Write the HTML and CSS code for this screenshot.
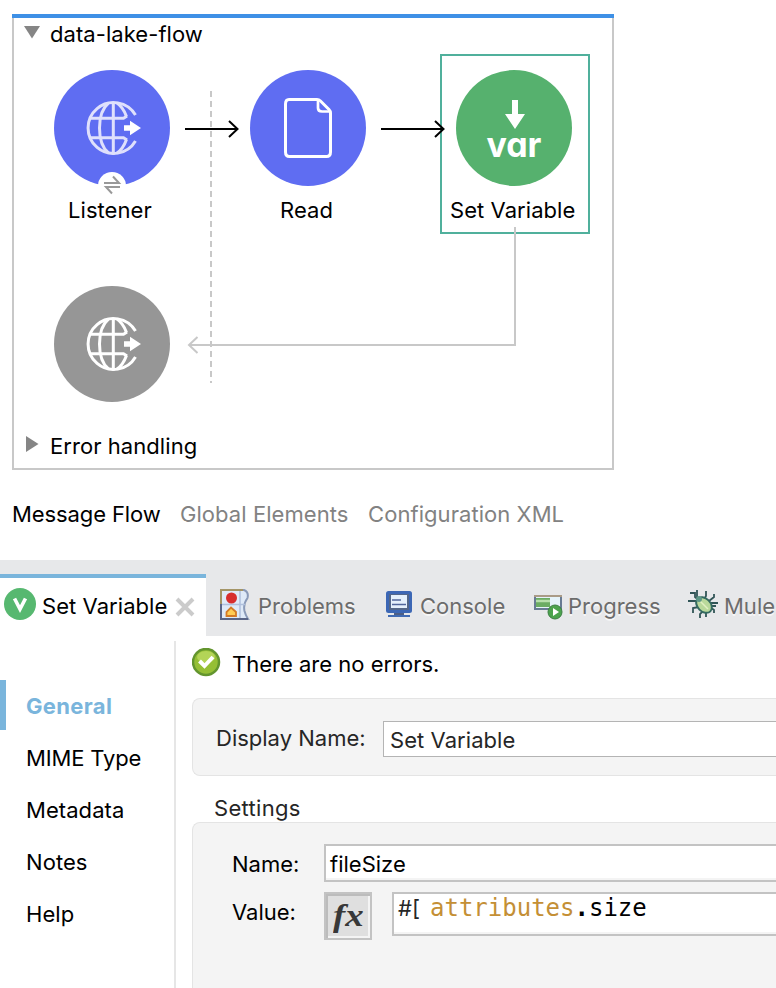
FILE: index.html
```html
<!DOCTYPE html>
<html lang="en">
<head>
<meta charset="utf-8">
<title>data-lake-flow</title>
<link rel="stylesheet" href="styles.css">
</head>
<body>
<svg width="0" height="0" class="defs">
  <defs>
    <g id="globe">
      <g fill="none" stroke-width="3">
        <path d="M81.500 45A25.500 25.500 0 1 0 81.500 71"/>
        <path d="M59.300 32.500V84.500M36 48.300H69.500L73 46M36 67.700H69.500L73 70"/>
        <path d="M54.500 33C42.500 43 42.500 73 54.500 83M63 33C67.500 36 70.500 41 72.500 46.500M63 83C67.500 80 70.500 75 72.500 69.500"/>
      </g>
      <path d="M70 55.200H76V50.800L87 58L76 65.300V60.800H70Z" fill="#fff" stroke="none"/>
    </g>
  </defs>
</svg>

<section class="canvas">
  <div class="flow-box"></div>
  <svg class="wires" width="776" height="490" fill="none">
    <path d="M211 91V383" stroke="#c8c8c8" stroke-width="2" stroke-dasharray="6 4"/>
    <path d="M185 129H237M229 121L237.500 129L229 137" stroke="#000" stroke-width="2"/>
    <path d="M24 26H40L32 38.500Z" fill="#858585"/>
    <path d="M26 436V452L38.500 444Z" fill="#858585"/>
  </svg>
  <span class="label flow-title">data-lake-flow</span>

  <svg class="node listener" width="116" height="116">
    <circle cx="58" cy="58" r="58" fill="#5f6df2"/>
    <use href="#globe" stroke="#dfe0fc"/>
    <circle cx="58" cy="116" r="14" fill="#fff"/>
  </svg>
  <svg class="swap" width="20" height="22" fill="none" stroke="#999" stroke-width="2">
    <path d="M2 9H17L11 2.500M18 13H4L10 19.500"/>
  </svg>
  <span class="label listener-label">Listener</span>

  <svg class="node read" width="116" height="116">
    <circle cx="58" cy="58" r="58" fill="#5f6df2"/>
    <path d="M39 29.500H67Q69 29.500 70.500 31L79 39.500Q80.500 41 80.500 43V82Q80.500 86.500 76.500 86.500H39.500Q35.500 86.500 35.500 82V34Q35.500 29.500 39 29.500Z" fill="none" stroke="#fff" stroke-width="3" stroke-linejoin="round"/>
    <path d="M68 30V38Q68 41.500 72 41.500H80" fill="none" stroke="#fff" stroke-width="2.700"/>
  </svg>
  <span class="label read-label">Read</span>

  <div class="selection"></div>
  <svg class="node variable" width="116" height="116">
    <circle cx="58" cy="58" r="58" fill="#56b16e"/>
    <path d="M56 30H62V44H69L59 59L49 44H56Z" fill="#fff"/>
    <text x="30.500" y="86.500" class="var-text" textLength="55" lengthAdjust="spacing">var</text>
  </svg>
  <span class="label variable-label">Set Variable</span>

  <svg class="node response" width="116" height="116">
    <circle cx="58" cy="58" r="58" fill="#969696"/>
    <use href="#globe" stroke="#fff"/>
  </svg>
  <svg class="wires" width="776" height="490" fill="none">
    <path d="M515 227V345H189M197.500 337L189 345L197.500 353" stroke="#c8c8c8" stroke-width="2"/>
    <path d="M381 129H443M435 121L443.500 129L435 137" stroke="#000" stroke-width="2"/>
  </svg>
  <span class="label error-label">Error handling</span>
</section>

<nav class="editor-tabs">
  <span class="current w-message">Message Flow</span>
  <span class="w-global">Global Elements</span>
  <span class="w-config">Configuration XML</span>
</nav>

<nav class="views">
  <div class="view active">
    <svg width="32" height="32"><circle cx="16" cy="16" r="16" fill="#57b870"/><path d="M10.500 10.500L16 21L21.500 10.500" fill="none" stroke="#fff" stroke-width="3.600"/></svg>
    <span class="t-active">Set Variable</span>
    <svg class="close" width="20" height="20"><path d="M2 2L18 18M18 2L2 18" stroke="#cbcbcb" stroke-width="4"/></svg>
  </div>
  <div class="view problems">
    <svg width="30" height="32">
      <path d="M1 1H24Q29 3 27.500 9Q23 15 24.500 22Q25.500 26 28 30H1Z" fill="#dfeaf8" stroke="#8a9ab8" stroke-width="2"/>
      <path d="M20 2V29M2 15.500H25" stroke="#b0c0dc" stroke-width="1.500"/>
      <path d="M1 30V1H23" fill="none" stroke="#a49567" stroke-width="2"/>
      <path d="M1 15V30H28" fill="none" stroke="#596587" stroke-width="2"/>
      <circle cx="11.500" cy="9" r="5.500" fill="#d72e2e"/>
      <path d="M6.500 27V23L11 18.500L16 23V27Z" fill="#ffcc55" stroke="#d47b26" stroke-width="1.800"/>
    </svg>
    <span>Problems</span>
  </div>
  <div class="view console">
    <svg width="26" height="28">
      <rect width="26" height="22" rx="2.500" fill="#3c67b5"/>
      <rect x="3" y="3" width="20" height="16" fill="#536789"/><rect x="5" y="4" width="16" height="13" fill="#e4f0fc"/>
      <path d="M6 9H15M6 13.500H20" stroke="#50669b" stroke-width="1.600"/>
      <path d="M8 22H18V24H8Z" fill="#4d5f86"/><path d="M2 25H24" stroke="#416bb3" stroke-width="2"/>
    </svg>
    <span>Console</span>
  </div>
  <div class="view progress">
    <svg width="29" height="26">
      <rect x="1" y="2" width="26" height="13" fill="#e5f3fa" stroke="#687b93" stroke-width="2"/>
      <path d="M0 2H28" stroke="#aa9b87" stroke-width="2"/>
      <rect x="2" y="4" width="14" height="9" fill="#6bac63"/><path d="M2 7H16" stroke="#b7dfab" stroke-width="2.500"/>
      <circle cx="21" cy="18" r="7" fill="#4ba34d" stroke="#3b7e42"/><path d="M19 14V22L25 18Z" fill="#fff"/>
    </svg>
    <span>Progress</span>
  </div>
  <div class="view mule">
    <svg width="31" height="32">
      <path d="M9 1V8L13 12M18 2V7L16 10M2 4H7V8L13 13M0 12H9M5 24V19L11 18M12 29V25L16 21M18 24V28M21 12L26 8V5M22 14H30M22 18L26 21V24M23 17H28" fill="none" stroke="#315557" stroke-width="1.800"/>
      <ellipse cx="16" cy="16" rx="9" ry="6.500" transform="rotate(45 16 16)" fill="#b9d99b" stroke="#356b61" stroke-width="2"/>
      <path d="M11 11L20 20" stroke="#e1efc3" stroke-width="1.500"/><circle cx="11" cy="10" r="3" fill="#5d9787"/>
    </svg>
    <span>Mule</span>
  </div>
</nav>

<main class="properties">
  <aside class="sections">
    <div class="section chosen"><span>General</span></div>
    <div class="section mime">MIME Type</div>
    <div class="section">Metadata</div>
    <div class="section">Notes</div>
    <div class="section">Help</div>
  </aside>
  <div class="form">
    <div class="status">
      <svg width="30" height="30">
        <circle cx="14" cy="14" r="13" fill="#95bf35" stroke="#63952e" stroke-width="2.500"/>
        <ellipse cx="14" cy="9" rx="9" ry="6" fill="#b3d457"/>
        <path d="M7.500 13L12.500 18L21 9" fill="none" stroke="#fff" stroke-width="4"/>
      </svg>
      <span>There are no errors.</span>
    </div>
    <div class="panel display">
      <label>Display Name:</label>
      <div class="field thin">Set Variable</div>
    </div>
    <h2>Settings</h2>
    <div class="panel settings">
      <div class="row">
        <label class="s-label">Name:</label>
        <div class="field name">fileSize</div>
      </div>
      <div class="row value-row">
        <label class="s-label">Value:</label>
        <div class="fx"><i>fx</i></div>
        <div class="field code"><span class="hash">#[</span><span class="attr">attributes</span><b>.</b>size</div>
      </div>
    </div>
  </div>
</main>
</body>
</html>
```
FILE: styles.css
```css
* { box-sizing: border-box; }
body {
  margin: 0;
  width: 776px;
  height: 988px;
  overflow: hidden;
  background: #fff;
  color: #000;
  font: 22px/26px Inter, "Liberation Sans", sans-serif;
  letter-spacing: .06px;
  white-space: nowrap;
}
svg { display: block; flex: none; }
.defs { position: absolute; }

.canvas { position: relative; height: 490px; }
.flow-box {
  position: absolute;
  left: 12px; top: 14px;
  width: 602px; height: 456px;
  border: 2px solid #c8c8c8;
  border-top: 0;
}
.flow-box::before {
  content: "";
  position: absolute;
  left: -2px; right: -2px; top: 0;
  height: 4px;
  background: #3e90e6;
}
.wires { position: absolute; left: 0; top: 0; }
.node { position: absolute; }
.listener { left: 54px; top: 70px; }
.read { left: 250px; top: 70px; }
.variable { left: 456px; top: 70px; }
.response { left: 54px; top: 286px; }
.swap { position: absolute; left: 102px; top: 174px; }
.selection {
  position: absolute;
  left: 440px; top: 54px;
  width: 150px; height: 180px;
  border: 2px solid #50b09c;
}
.var-text { font: 700 34px Inter, sans-serif; font-feature-settings: "cv11" 1; fill: #fff; }
.label { position: absolute; }
.flow-title { left: 50px; top: 21px; }
.listener-label { left: 68px; top: 197px; }
.read-label { left: 280px; top: 197px; }
.variable-label { left: 450px; top: 197px; }
.error-label { left: 50px; top: 433px; }

.editor-tabs {
  display: flex;
  height: 70px;
  padding: 11px 0 0 12px;
  color: #828282;
}
.editor-tabs .current { color: #000; letter-spacing: -.1px; }
.w-message { width: 168px; }
.w-global { width: 188px; }

.views {
  display: flex;
  height: 76px;
  padding-top: 14px;
  background: #e7e8ea;
  color: #6c6c6c;
  text-shadow: 0 2px 0 #f6f6f6;
  letter-spacing: 0;
}
.view { display: flex; align-items: center; height: 62px; padding-top: 2px; }
.view.active {
  width: 206px;
  padding: 0 0 0 4px;
  border-top: 4px solid #7ab5dc;
  background: #fff;
  color: #000;
  text-shadow: none;
  letter-spacing: .06px;
}
.view svg { margin-top: -3px; }
.view.active svg:first-child { margin-top: -6px; }
.active span { margin: -2px 0 0 6px; width: 128px; }
.view .close { margin: 0 0 0 5px; }
.problems { padding-left: 14px; width: 180px; }
.problems span { margin-left: 8px; }
.console { width: 148px; }
.console span { margin-left: 8px; }
.progress { width: 154px; }
.progress svg { margin-top: 1px; }
.progress span { margin-left: 5px; }
.mule span { margin-left: 5px; }

.properties { display: flex; height: 352px; }
.sections {
  width: 176px;
  margin-top: 5px;
  padding-top: 39px;
  border-right: 2px solid #e6e6e6;
}
.section { height: 52px; padding: 13px 0 0 26px; }
.mime { letter-spacing: -.15px; }
.chosen {
  height: 50px;
  margin-bottom: 2px;
  padding-left: 20px;
  border-left: 6px solid #7ab5dc;
  color: #7ab5dc;
  font-weight: 700;
  letter-spacing: .35px;
}
.form { width: 600px; padding-left: 16px; }
.status { display: flex; height: 62px; padding-top: 12px; letter-spacing: 0; }
.status span { margin: 3px 0 0 10px; }
.panel {
  background: #f4f4f4;
  border: 1px solid #e4e4e4;
  border-right: 0;
  border-radius: 8px 0 0 8px;
  color: #262626;
}
.display { display: flex; height: 78px; padding: 22px 0 0 23px; letter-spacing: 0; }
.display label { width: 167px; padding-top: 4px; }
.field { flex: 1; background: #fff; border: 2px solid #c3c3c3; border-right: 0; }
.thin { height: 36px; padding: 5px 0 0 6px; border-width: 1px 0 1px 1px; border-color: #b4b4b4; color: #262626; letter-spacing: .06px; }
h2 { height: 46px; margin: 0; padding: 19px 0 0 22px; font: inherit; letter-spacing: .3px; color: #262626; }
.settings { height: 180px; padding: 21px 0 0 39px; border-bottom-left-radius: 0; color: #000; }
.row { display: flex; height: 48px; }
.s-label { width: 92px; padding-top: 7px; letter-spacing: 0; }
.name { height: 38px; padding: 5px 0 0 4px; box-shadow: inset 0 -2px #f4f4f4; letter-spacing: 0; }
.fx {
  width: 48px; height: 48px;
  margin-right: 20px;
  border: 2px solid #c3c3c3;
  background: #dfdfdf;
  box-shadow: inset 2px 2px #bcbcbc, inset -2px -2px #f4f4f4;
  text-align: center;
}
.fx i { display: inline-block; font: italic bold 32px/42px "Liberation Serif", serif; letter-spacing: 0; color: #383838; transform: scaleX(1.15); }
.code {
  height: 44px;
  padding-left: 4px;
  font: 24px/28px "DejaVu Sans Mono", monospace;
  letter-spacing: 0;
  box-shadow: inset 0 -2px #f4f4f4;
}
.hash { display: inline-block; width: 32px; font: 22px/28px Inter, sans-serif; color: #262626; }
.attr { color: #c48f35; }
```
